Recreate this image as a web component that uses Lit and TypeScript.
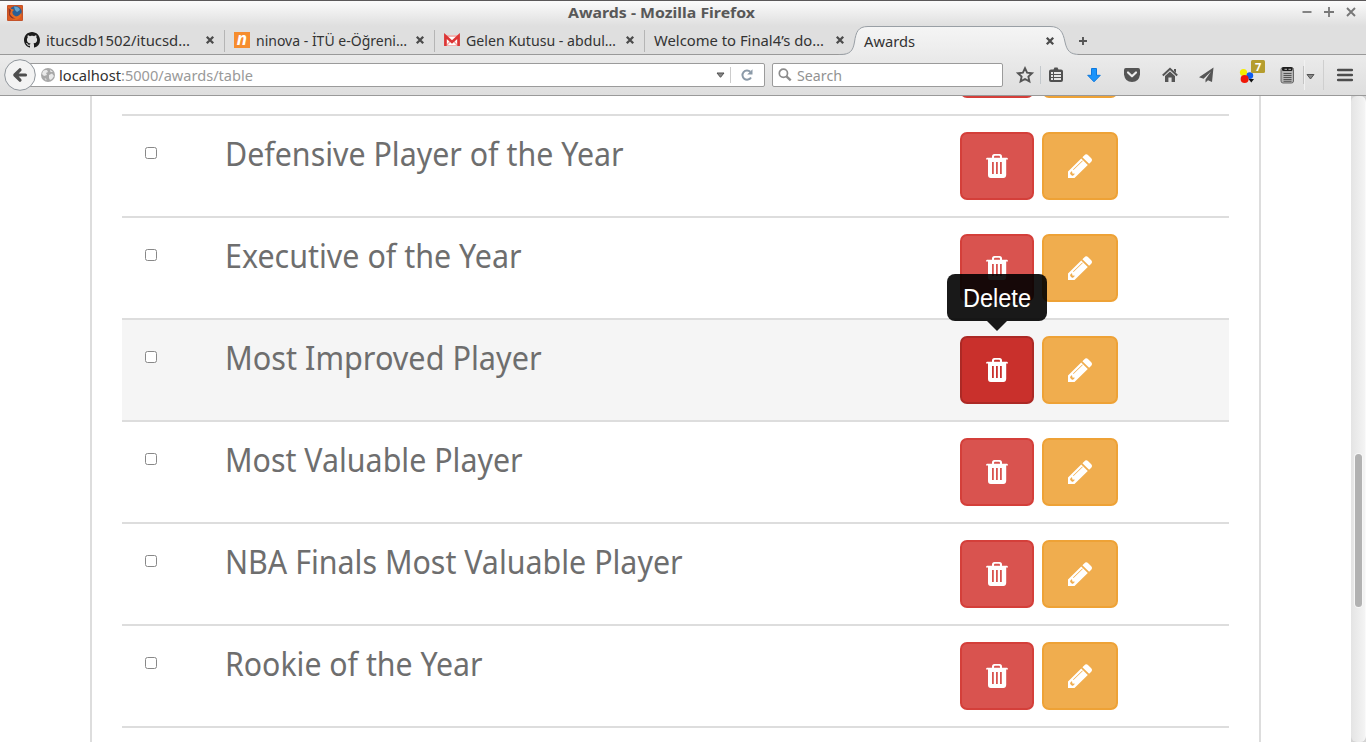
import { LitElement, html, svg, css, nothing } from "lit";
import { customElement, property } from "lit/decorators.js";

/* Text set on a baseline with a fixed advance width. */
@customElement("fit-text")
class FitText extends LitElement {
  @property() text = "";
  @property({ type: Number }) w = 0;
  @property({ type: Number }) base = 12;
  static styles = css`
    :host { display: block; flex: none; line-height: 0; }
    svg { display: block; overflow: visible; }
    text { fill: currentColor; white-space: pre; }
  `;
  render() {
    return html`<svg width=${this.w} height=${this.base + 4}>
      <text x="0" y=${this.base} textLength=${this.w} lengthAdjust="spacingAndGlyphs">${this.text}</text>
    </svg>`;
  }
}

const icon = (w: number, h: number, body: unknown) =>
  html`<svg class="ic" width=${w} height=${h} viewBox="0 0 ${w} ${h}">${body}</svg>`;

const firefox = icon(16, 16, svg`
  <rect width="16" height="16" rx="1" fill="#c4532a"/>
  <rect x="1" y="1" width="14" height="14" fill="#dc5a20"/>
  <circle cx="8.6" cy="7.2" r="6.2" fill="#2b5f94"/>
  <path d="M7 1.6 Q12 1.6 13 5 L10 7 L8 5Z" fill="#65a5cf"/>
  <path d="M1 2 Q3 2 4 4 Q5.6 3.6 7 5 L5.4 6.6 Q5 10 9 11.4 Q13 11 14.4 7 Q15.5 13 9 15 Q3 15 1.5 9Z" fill="#e66b22"/>
  <path d="M1.5 3 L4 5 L3 9 Q5 13 9 13.4 Q4 14.5 2 10Z" fill="#8e3229"/>`);

const github = icon(16, 16, svg`
  <path fill="#1b1b1b" d="M8 0C3.58 0 0 3.58 0 8c0 3.54 2.29 6.53 5.47 7.59.4.07.55-.17.55-.38 0-.19-.01-.82-.01-1.49-2.01.37-2.53-.49-2.69-.94-.09-.23-.48-.94-.82-1.13-.28-.15-.68-.52-.01-.53.63-.01 1.08.58 1.23.82.72 1.21 1.87.87 2.33.66.07-.52.28-.87.51-1.07-1.78-.2-3.64-.89-3.64-3.95 0-.87.31-1.59.82-2.15-.08-.2-.36-1.02.08-2.12 0 0 .67-.21 2.2.82.64-.18 1.32-.27 2-.27s1.36.09 2 .27c1.53-1.04 2.2-.82 2.2-.82.44 1.1.16 1.92.08 2.12.51.56.82 1.27.82 2.15 0 3.07-1.87 3.75-3.65 3.95.29.25.54.73.54 1.48 0 1.07-.01 1.93-.01 2.2 0 .21.15.46.55.38A8 8 0 0 0 16 8c0-4.42-3.58-8-8-8z"/>`);

const ninova = html`<span class="ninova">n</span>`;

const gmail = icon(16, 12, svg`
  <rect x="0" y="1" width="16" height="11" fill="#f3b5b2"/>
  <path d="M3 3 L13 3 L13 11 L3 11Z" fill="#fff"/>
  <path d="M3 11 L6.5 7 M13 11 L9.5 7" stroke="#f0a8a6" stroke-width="1.2"/>
  <path d="M1.4 12 V2 L8 8 L14.6 2 V12" fill="none" stroke="#dc3636" stroke-width="2.6"/>`);

const tabClose = icon(10, 10, svg`
  <path d="M1.8 1.8 L8.2 8.2 M8.2 1.8 L1.8 8.2" stroke="#4c4c4c" stroke-width="2.3"/>`);

const trash = icon(22, 24, svg`
  <path fill="#fff" fill-rule="evenodd" d="M6 3.8 V2.6 Q6 0 8.4 0 H13.6 Q16 0 16 2.6 V3.8 H21 Q22 3.8 22 5.6 H20.2 V21 Q20 24 17.4 24 H4.8 Q2 24 2 21 V5.6 H0 Q0 3.8 1 3.8Z
   M8 3.8 H14 V3 Q14 1.8 13 1.8 H9 Q8 1.8 8 3Z M6 8 H7.8 V20 H6Z M10 8 H11.8 V20 H10Z M14 8 H15.8 V20 H14Z"/>`);

const pencil = icon(24, 24, svg`
  <path fill="#fff" d="M16.2 1.4 Q18.2 -.8 20.2 1.2 L23 4 Q25 6 23 8 L21.1 9.8 L14.4 3.2Z"/>
  <path fill="#fff" fill-rule="evenodd" d="M13.2 4.4 L19.8 11 L6.5 24 H0 V17.6Z
    M5 15.6 L5.5 16.1 L14.8 7 L14.3 6.5Z M2.2 18.8 L4 17 L4.4 19.4 L7 19.8 L5 21.8 H4 L2.2 20Z"/>`);

interface Tab { title: string; w: number; fav?: unknown; sep: boolean }
const tabs: Tab[] = [
  { title: "itucsdb1502/itucsd…", w: 144, fav: github, sep: true },
  { title: "ninova - İTÜ e-Öğreni…", w: 151, fav: ninova, sep: true },
  { title: "Gelen Kutusu - abdul…", w: 150, fav: gmail, sep: true },
  { title: "Welcome to Final4’s do…", w: 170, sep: false },
];

interface Award { name: string; w: number; hover?: boolean }
const awards: Award[] = [
  { name: "", w: 0 },
  { name: "Defensive Player of the Year", w: 398.6 },
  { name: "Executive of the Year", w: 296.6 },
  { name: "Most Improved Player", w: 316.6, hover: true },
  { name: "Most Valuable Player", w: 297.6 },
  { name: "NBA Finals Most Valuable Player", w: 457.6 },
  { name: "Rookie of the Year", w: 257.6 },
  { name: "", w: 0 },
];

@customElement("app-root")
class AppRoot extends LitElement {
  static styles = css`
    :host {
      display: flex; flex-direction: column; width: 1366px; height: 742px;
      overflow: hidden; background: #fff; box-sizing: border-box;
      font-family: "Noto Sans", "Open Sans", sans-serif; font-size: 14px; color: #333;
    }
    * { box-sizing: border-box; }
    .ic { display: block; flex: none; overflow: visible; }
    .top { height: 55px; flex: none; border-top: 1px solid #5b5859;
      background: linear-gradient(#fbfbfb, #dfdfdf 25px); }
    .title { height: 25px; display: flex; align-items: flex-start; padding: 4px 10px 0 7px; }
    .caption { margin: 0 auto 0 545px; font-weight: 700; color: #585858; }
    .wm { display: flex; gap: 12px; padding-top: 2px; }
    .tabs { height: 29px; display: flex; padding-left: 15px; }
    .tab { width: 210px; height: 29px; flex: none; display: flex; align-items: center;
      padding-left: 9px; border-bottom: 1px solid #999; }
    .tab.sep { background: linear-gradient(#b5b5b5, #b5b5b5) 209px 4px / 1px 22px no-repeat; }
    .tab fit-text { margin: 0 0 0 6px; }
    .tab.plain fit-text { margin-left: 0; }
    .tab .x { margin-left: auto; margin-right: 10px; }
    .current { width: 240px; margin-left: -15px; height: 29px; flex: none; display: grid; }
    .current > * { grid-area: 1 / 1; }
    .current .in { display: flex; align-items: center; padding: 0 25px 1px 24px; justify-content: space-between; z-index: 1; }
    .rest { flex: 1; border-bottom: 1px solid #999; margin-left: -2px; padding: 10px 0 0 0; }
    .pre { width: 15px; margin-left: -15px; border-bottom: 1px solid #999; }
    .ninova { width: 16px; height: 16px; background: #f68d2e; color: #fff; flex: none;
      font: italic 700 17px/13px "Open Sans", sans-serif; text-align: center; }
    .nav { height: 41px; flex: none; display: flex; align-items: center; padding-left: 4px;
      background: linear-gradient(#ebebeb, #dedede); border-bottom: 1px solid #999; }
    .back { z-index: 1; margin: 0 -6px 0 0; }
    .url { width: 736px; height: 24px; background: #fff; border: 1px solid #9b9b9b; border-radius: 2px;
      display: flex; align-items: center; padding-left: 11px; margin-left: -1px; }
    .url .host { margin-left: 4px; color: #303030; }
    .url .path { color: #999; }
    .url .end { margin-left: auto; display: flex; align-items: center; gap: 5px; padding-right: 11px; }
    .vl { width: 1px; height: 16px; background: #ccc; flex: none; margin-right: 3px; }
    .search { width: 231px; height: 24px; background: #fff; border: 1px solid #9b9b9b; border-radius: 2px;
      margin-left: 7px; display: flex; align-items: center; gap: 5px; padding-left: 5px; color: #929292; }
    .badge { fill: #b59d2e; }
    .seven { font: 700 11px "Noto Sans", sans-serif; fill: #fff; }
    .page { flex: 1; min-height: 0; display: flex; overflow: hidden; }
    .panel { width: 1171px; margin-left: 90px; border: solid #ddd; border-width: 0 2px; padding: 0 30px; }
    .rows { margin-top: -84px; width: 1107px; }
    .row { height: 102px; border-top: 2px solid #ddd; display: flex; align-items: flex-start; }
    .row.hover { background: #f5f5f5; }
    .check { appearance: none; width: 12px; height: 12px; margin: 31px 68.4px 0 23px; flex: none;
      border: 1px solid #888; border-radius: 2.5px; background: #fff; }
    .name { width: 734.6px; padding-top: 14px; color: #6e6e6e; font-size: 33.4px; }
    .acts { display: flex; gap: 8px; padding-top: 16px; }
    .btn { height: 68px; width: 74px; border: 2px solid #d43f3a; background: #d9534f; border-radius: 7px;
      padding: 0; display: flex; align-items: center; justify-content: center; position: relative; }
    .edit { width: 76px; background: #f0ad4e; border-color: #eea236; }
    .hover .del { background: #c9302c; border-color: #ac2925; }
    .tip { position: absolute; left: -15px; top: -64px; width: 100px; height: 57px; z-index: 2; color: #fff;
      font: 25.4px "Liberation Sans", Arial, sans-serif; }
    .bubble { height: 47px; border-radius: 8px; background: rgba(0,0,0,.9); padding: 8px 0 0 16px; }
    .arrow { width: 20px; height: 10px; margin-left: 40px; background: rgba(0,0,0,.9);
      clip-path: polygon(0 0, 100% 0, 50% 100%); }
    .bar { width: 15px; margin-left: auto; background: #d4d4d4; }
    .track { height: 100%; border-radius: 6px; background: linear-gradient(90deg, #e4e4e4, #f4f4f4);
      padding: 358px 3px 0 4px; border-right: 1px solid #fafafa; }
    .thumb { width: 7px; height: 153px; border-radius: 4px; background: #b2b2b2; box-shadow: 0 0 0 1px #f7f7f7; }
  `;

  tools() {
    return html`<svg class="ic" width="363" height="40" viewBox="1003 55 363 40">
      <path d="M1025 68.2 L1027.1 72.7 L1032 73.3 L1028.4 76.6 L1029.4 81.4 L1025 79 L1020.6 81.4 L1021.6 76.6 L1018 73.3 L1022.9 72.7Z" fill="none" stroke="#555" stroke-width="1.9"/>
      <path d="M1040.5 66 V84" stroke="#c3c8cc"/>
      <path fill="#505050" fill-rule="evenodd" d="M1051 69.5 H1053.5 L1054.5 67.5 H1057.5 L1058.5 69.5 H1061 Q1063 69.5 1063 71.5 V80 Q1063 82 1061 82 H1051 Q1049 82 1049 80 V71.5 Q1049 69.5 1051 69.5Z
        M1051 72 V74 H1053 V72Z M1054 72 V74 H1061 V72Z M1051 75 V77 H1053 V75Z M1054 75 V77 H1061 V75Z M1051 78 V80 H1053 V78Z M1054 78 V80 H1061 V78Z"/>
      <path d="M1091.5 68.5 H1096.5 V75.3 H1100.3 L1094 81.8 L1087.7 75.3 H1091.5Z" fill="#1a94fb" stroke="#0d78dc"/>
      <path d="M1125.8 68 H1138.2 Q1140 68 1140 70 V74.5 Q1139 82 1132 82 Q1125 82 1124 74.5 V70 Q1124 68 1125.8 68Z" fill="#555"/>
      <path d="M1128 72.5 L1132 76.3 L1136 72.5" fill="none" stroke="#eee" stroke-width="2.2" stroke-linecap="round" stroke-linejoin="round"/>
      <path d="M1162.8 75.5 L1170 68.8 L1177.2 75.5" fill="none" stroke="#555" stroke-width="2"/>
      <path d="M1174 69 H1176 V73 L1174 71Z M1165 76 L1170 71.5 L1175 76 V82 H1171.6 V77.5 H1168.4 V82 H1165Z" fill="#555"/>
      <path d="M1213.5 67.5 L1199 77.2 L1203.6 78.8 L1211 71.5 L1205.5 79.5 V82.5 L1208 80.3 L1212 82Z" fill="#555"/>
      <circle cx="1243.5" cy="72.5" r="3.6" fill="#f5ee00"/>
      <circle cx="1249.8" cy="75.6" r="3.4" fill="#0b5cf0"/>
      <circle cx="1244.6" cy="79" r="4" fill="#f01808"/>
      <path d="M1248.5 79 H1254 L1251.3 82.5Z" fill="#111"/>
      <rect class="badge" x="1251" y="60" width="14" height="13" rx="1.5"/>
      <text class="seven" x="1255" y="70.5">7</text>
      <rect x="1281" y="67.5" width="12.5" height="15.5" rx="2" fill="#b4b4b4" stroke="#666"/>
      <rect x="1282" y="67" width="10.5" height="4" rx="1.5" fill="#1c1c1c"/>
      <path d="M1284.5 69.3 H1287 M1288.5 69.3 H1291" stroke="#bbb"/>
      <path d="M1283.5 73.5 H1291.5 M1283.5 75.5 H1291.5 M1283.5 77.5 H1291.5 M1283.5 79.5 H1291.5 M1283.5 81.3 H1291.5" stroke="#555"/>
      <path d="M1303.5 66 V84" stroke="#c3c3c3"/><path d="M1304.5 60 V90" stroke="#f1f1f1"/>
      <path d="M1307 74.5 H1314 L1310.5 79Z" fill="#888" stroke="#555"/>
      <path d="M1323.5 60 V90" stroke="#cfcfcf"/>
      <path d="M1338.2 70 H1351.8 M1338.2 75 H1351.8 M1338.2 80 H1351.8" stroke="#4d4d4d" stroke-width="2.6" stroke-linecap="round"/>
    </svg>`;
  }

  render() {
    return html`
      <div class="top">
        <div class="title">
          ${firefox}
          <fit-text class="caption" text="Awards - Mozilla Firefox" .w=${187} .base=${13}></fit-text>
          <div class="wm">
            ${icon(10, 10, svg`<path d="M.5 5 H9.5" stroke="#777" stroke-width="1.8"/>`)}
            ${icon(10, 10, svg`<path d="M0 5 H10 M5 0 V10" stroke="#777" stroke-width="1.8"/>`)}
            ${icon(10, 10, svg`<path d="M1 1 L9 9 M9 1 L1 9" stroke="#777" stroke-width="1.9"/>`)}
          </div>
        </div>
        <div class="tabs">
          <div class="pre"></div>
          ${tabs.map((t) => html`<div class="tab ${t.sep ? "sep" : "plain"}">
            ${t.fav ?? nothing}
            <fit-text text=${t.title} .w=${t.w} .base=${16}></fit-text>
            <span class="x">${tabClose}</span>
          </div>`)}
          <div class="current">
            <svg class="ic" width="240" height="30" viewBox="0 0 240 30">
              <defs><linearGradient id="g" x1="0" y1="0" x2="0" y2="1">
                <stop offset="0" stop-color="#f5f5f5"/><stop offset="1" stop-color="#ebebeb"/></linearGradient></defs>
              <path d="M-2 29 C10 29 13 25 14.5 16 C16 6 18 .5 28 .5 H210 C220 .5 223 6 225 16 C227 25 230 28.5 238 28.5 V30 H-2Z" fill="url(#g)"/>
              <path d="M0 28.5 C10 28.5 13 25 14.5 16 C16 6 18 .5 28 .5 H210 C220 .5 223 6 225 16 C227 25 230 28.5 240 28.5" fill="none" stroke="#999fa5"/>
            </svg>
            <div class="in">
              <fit-text text="Awards" .w=${51} .base=${16}></fit-text>
              <span>${tabClose}</span>
            </div>
          </div>
          <div class="rest">${icon(10, 10, svg`<path d="M1 5 H9 M5 1 V9" stroke="#555" stroke-width="1.9"/>`)}</div>
        </div>
      </div>

      <div class="nav">
        <span class="back">${icon(32, 32, svg`
          <circle cx="16" cy="16" r="15.3" fill="#f3f3f3" stroke="#8f959b"/>
          <path d="M11 16 H21.5 M16 10.8 L10.8 16 L16 21.2" fill="none" stroke="#4f4f4f" stroke-width="3.2" stroke-linejoin="round" stroke-linecap="round"/>`)}</span>
        <div class="url">
          ${icon(14, 14, svg`
            <circle cx="7" cy="7" r="7" fill="#a8a8a8"/>
            <path d="M2 3 Q4 1.5 6 2 L7 4 L5 5 L6 7 L3 8 L1 6Z M8 7 L11 5.5 L13 8 L11 11 L9 12 L8 10Z M9 1.6 L12 4 L9.5 4Z M3.5 10 L5.5 11 L5 12.5Z" fill="#e9e9e9"/>`)}
          <fit-text class="host" text="localhost" .w=${62} .base=${16}></fit-text>
          <fit-text class="path" text=":5000/awards/table" .w=${132} .base=${16}></fit-text>
          <div class="end">
            ${icon(9, 6, svg`<path d="M1 1 H8 L4.5 5.3Z" fill="#888" stroke="#4f4f4f"/>`)}
            <span class="vl"></span>
            ${icon(14, 12, svg`<path d="M12 8.5 A4.6 4.6 0 1 1 11.3 2.8" fill="none" stroke="#8b9aa8" stroke-width="2"/>
              <path d="M13.5 .3 V5.6 H8.2Z" fill="#8b9aa8"/>`)}
          </div>
        </div>
        <div class="search">
          ${icon(14, 14, svg`<circle cx="5.4" cy="5.2" r="4.1" fill="none" stroke="#8c8c8c" stroke-width="1.7"/>
            <path d="M8.5 8.3 L12.7 12.3" stroke="#8c8c8c" stroke-width="2.4"/>`)}
          <fit-text text="Search" .w=${45} .base=${16}></fit-text>
        </div>
        ${this.tools()}
      </div>

      <div class="page">
        <div class="panel">
          <div class="rows">
            ${awards.map((a) => html`<div class="row ${a.hover ? "hover" : ""}">
              <input class="check" type="checkbox" />
              <div class="name">${a.name ? html`<fit-text text=${a.name} .w=${a.w} .base=${36}></fit-text>` : nothing}</div>
              <div class="acts">
                <button class="btn del">${trash}${a.hover ? html`<span class="tip">
                  <div class="bubble"><fit-text text="Delete" .w=${68} .base=${24.5}></fit-text></div>
                  <div class="arrow"></div></span>` : nothing}</button>
                <button class="btn edit">${pencil}</button>
              </div>
            </div>`)}
          </div>
        </div>
        <div class="bar"><div class="track"><div class="thumb"></div></div></div>
      </div>
    `;
  }
}
